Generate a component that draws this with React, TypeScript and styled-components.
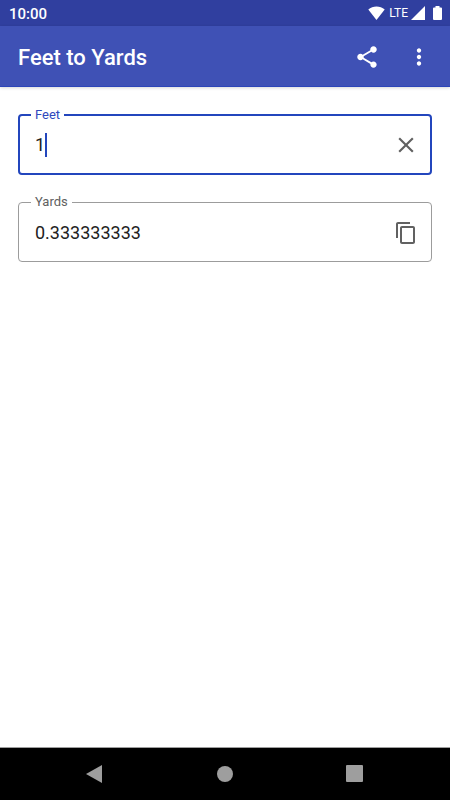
import React, { useState } from "react";
import styled, { createGlobalStyle } from "styled-components";

const GlobalStyle = createGlobalStyle`
  *, *::before, *::after { box-sizing: border-box; }
  body {
    margin: 0;
    background: #fff;
    font-family: Roboto, "Liberation Sans", sans-serif;
  }
`;

const Screen = styled.div`
  display: flex;
  flex-direction: column;
  min-height: 100vh;
`;

const StatusBar = styled.div`
  display: flex;
  align-items: center;
  justify-content: space-between;
  height: 26px;
  padding: 0 8px 0 9px;
  background: #303f9f;
  color: #fff;
`;

const Clock = styled.time`
  font-size: 15px;
  line-height: 18px;
  font-weight: 500;
  padding-top: 2px;
`;

const StatusIcons = styled.div`
  display: flex;
  align-items: center;
`;

const Network = styled.span`
  font-size: 12px;
  line-height: 14px;
  margin: 0 3px 0 4px;
`;

const Battery = styled.svg`
  margin-left: 8px;
`;

const AppBar = styled.header`
  display: flex;
  align-items: center;
  justify-content: space-between;
  height: 61px;
  padding: 2px 18px 0 18px;
  background: #3f51b5;
  border-bottom: 1px solid #2c45b8;
  box-shadow: 0 1px 3px rgba(0, 0, 0, 0.16);
  color: #fff;
`;

const Title = styled.h1`
  margin: 0;
  padding-top: 2px;
  font-size: 22px;
  line-height: 28px;
  font-weight: 500;
`;

const Actions = styled.div`
  display: flex;
  gap: 26px;
`;

const IconButton = styled.button`
  display: flex;
  align-items: center;
  justify-content: center;
  width: 26px;
  height: 26px;
  padding: 0;
  border: 0;
  background: none;
  color: inherit;
  cursor: pointer;
`;

const Form = styled.main`
  flex: 1;
  display: flex;
  flex-direction: column;
  gap: 19px;
  padding: 20px 18px;
`;

const Field = styled.fieldset<{ $active?: boolean }>`
  min-width: 0;
  margin: 0;
  padding: 0 ${(p) => (p.$active ? 11 : 12)}px;
  border: ${(p) => (p.$active ? "2px solid #2346bd" : "1px solid #9c9c9c")};
  border-radius: 4px;
  color: ${(p) => (p.$active ? "#2f49bd" : "#616161")};
`;

const Legend = styled.legend`
  padding: 0 4px;
  font-size: 13px;
  line-height: 16px;
  height: 16px;
`;

const FieldRow = styled.div<{ $active?: boolean }>`
  display: flex;
  align-items: center;
  height: ${(p) => (p.$active ? 50 : 51)}px;
  padding: 0 0 ${(p) => (p.$active ? 6 : 5)}px 4px;
  color: #616161;
`;

const Value = styled.input`
  min-width: 0;
  height: 28px;
  padding: 0;
  border: 0;
  outline: 0;
  background: none;
  color: #212121;
  font-family: inherit;
  font-size: 18px;
  line-height: 28px;
  caret-color: transparent;
`;

const WideValue = styled(Value)`
  flex: 1;
`;

const Caret = styled.span`
  width: 2px;
  height: 24px;
  margin-right: auto;
  background: #2346bd;
`;

const NavBar = styled.nav`
  display: flex;
  align-items: center;
  justify-content: center;
  gap: 104px;
  height: 53px;
  border-top: 1px solid #9e9e9e;
  background: #000;
  color: #9e9e9e;
`;

function Icon({ d, size = 26 }: { d: string; size?: number }) {
  return (
    <svg width={size} height={size} viewBox="0 0 24 24" fill="currentColor" aria-hidden="true">
      <path d={d} />
    </svg>
  );
}

const SHARE =
  "M18 16.08c-.76 0-1.44.3-1.96.77L8.91 12.7c.05-.23.09-.46.09-.7s-.04-.47-.09-.7l7.05-4.11c.54.5 1.25.81 2.04.81 1.66 0 3-1.34 3-3s-1.34-3-3-3-3 1.34-3 3c0 .24.04.47.09.7L8.04 9.81C7.5 9.31 6.79 9 6 9c-1.66 0-3 1.34-3 3s1.34 3 3 3c.79 0 1.5-.31 2.04-.81l7.12 4.16c-.05.21-.08.43-.08.65 0 1.61 1.31 2.92 2.92 2.92s2.92-1.31 2.92-2.92-1.31-2.92-2.92-2.92z";
const MORE =
  "M12 8c1.1 0 2-.9 2-2s-.9-2-2-2-2 .9-2 2 .9 2 2 2zm0 2c-1.1 0-2 .9-2 2s.9 2 2 2 2-.9 2-2-.9-2-2-2zm0 6c-1.1 0-2 .9-2 2s.9 2 2 2 2-.9 2-2-.9-2-2-2z";
const CLEAR =
  "M19 6.41 17.59 5 12 10.59 6.41 5 5 6.41 10.59 12 5 17.59 6.41 19 12 13.41 17.59 19 19 17.59 13.41 12z";
const COPY =
  "M16 1H4c-1.1 0-2 .9-2 2v14h2V3h12V1zm3 4H8c-1.1 0-2 .9-2 2v14c0 1.1.9 2 2 2h11c1.1 0 2-.9 2-2V7c0-1.1-.9-2-2-2zm0 16H8V7h11v14z";

export default function App() {
  const [feet, setFeet] = useState("1");
  const amount = parseFloat(feet);
  const yards = Number.isNaN(amount) ? "" : String(Number((amount / 3).toFixed(9)));

  return (
    <>
      <GlobalStyle />
      <Screen>
        <StatusBar>
          <Clock>10:00</Clock>
          <StatusIcons>
            <svg width="17" height="14" viewBox="0 0 17 14" fill="#fff" aria-hidden="true">
              <path d="M8.500 14 .3 3.500C2.500 1.500 5.500.5 8.500.5s6 1 8.200 3z" />
            </svg>
            <Network>LTE</Network>
            <svg width="14" height="14" viewBox="0 0 14 14" fill="#fff" aria-hidden="true">
              <path d="M14 0v14H0z" />
            </svg>
            <Battery width="9" height="14" viewBox="0 0 9 14" fill="#fff" aria-hidden="true">
              <path d="M2.500 0h4v1.500H8q1 0 1 1V13q0 1-1 1H1q-1 0-1-1V2.500q0-1 1-1h1.500z" />
            </Battery>
          </StatusIcons>
        </StatusBar>
        <AppBar>
          <Title>Feet to Yards</Title>
          <Actions>
            <IconButton type="button" aria-label="Share">
              <Icon d={SHARE} />
            </IconButton>
            <IconButton type="button" aria-label="More options">
              <Icon d={MORE} />
            </IconButton>
          </Actions>
        </AppBar>
        <Form>
          <Field $active>
            <Legend>
              <label htmlFor="feet">Feet</label>
            </Legend>
            <FieldRow $active>
              <Value
                id="feet"
                inputMode="decimal"
                value={feet}
                onChange={(e) => setFeet(e.target.value)}
                style={{ width: `${feet.length}ch` }}
              />
              <Caret />
              <IconButton type="button" aria-label="Clear" onClick={() => setFeet("")}>
                <Icon d={CLEAR} />
              </IconButton>
            </FieldRow>
          </Field>
          <Field>
            <Legend>
              <label htmlFor="yards">Yards</label>
            </Legend>
            <FieldRow>
              <WideValue id="yards" value={yards} readOnly />
              <IconButton
                type="button"
                aria-label="Copy"
                onClick={() => navigator.clipboard?.writeText(yards)}
              >
                <Icon d={COPY} size={24} />
              </IconButton>
            </FieldRow>
          </Field>
        </Form>
        <NavBar>
          <IconButton type="button" aria-label="Back">
            <svg width="26" height="26" viewBox="0 0 26 26" fill="currentColor" aria-hidden="true">
              <path d="M20 4v18L4 13z" />
            </svg>
          </IconButton>
          <IconButton type="button" aria-label="Home">
            <svg width="26" height="26" viewBox="0 0 26 26" fill="currentColor" aria-hidden="true">
              <circle cx="13" cy="13" r="8" />
            </svg>
          </IconButton>
          <IconButton type="button" aria-label="Overview">
            <svg width="26" height="26" viewBox="0 0 26 26" fill="currentColor" aria-hidden="true">
              <rect x="4" y="4" width="17" height="17" rx="1" />
            </svg>
          </IconButton>
        </NavBar>
      </Screen>
    </>
  );
}
